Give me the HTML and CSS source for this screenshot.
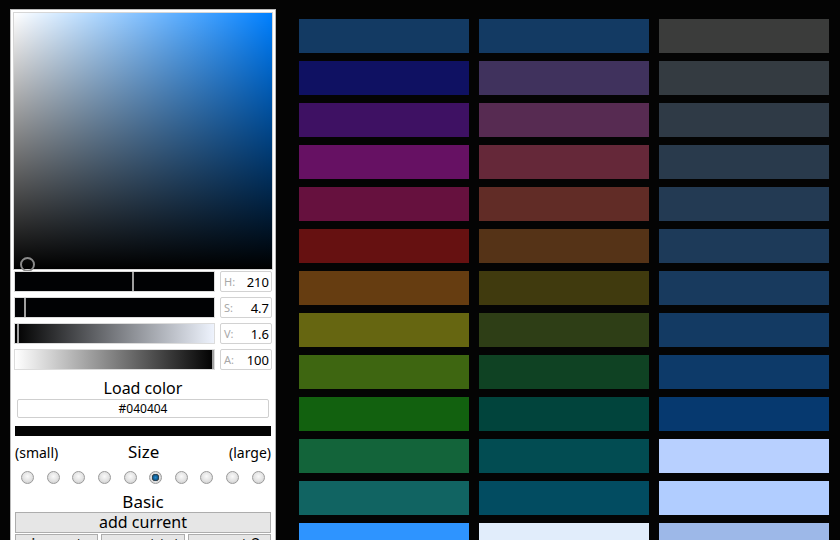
FILE: index.html
```html
<!DOCTYPE html>
<html>
<head>
<meta charset="utf-8">
<link rel="stylesheet" href="styles.css">
</head>
<body>
<div class="picker">
  <div class="sv">
    <span class="cursor"></span>
  </div>
  <div class="row">
    <div class="bar hue"><span class="mark" style="left:117px"></span></div>
    <div class="field"><span class="lbl">H:</span><span class="val">210</span></div>
  </div>
  <div class="row">
    <div class="bar sat"><span class="mark" style="left:9px"></span></div>
    <div class="field"><span class="lbl">S:</span><span class="val">4.7</span></div>
  </div>
  <div class="row">
    <div class="bar value"><span class="mark" style="left:2px"></span></div>
    <div class="field"><span class="lbl">V:</span><span class="val">1.6</span></div>
  </div>
  <div class="row">
    <div class="bar alpha"><span class="mark" style="left:197px"></span></div>
    <div class="field"><span class="lbl">A:</span><span class="val">100</span></div>
  </div>
  <div class="title">Load color</div>
  <div class="hexbox">#040404</div>
  <div class="preview"></div>
  <div class="sizerow">
    <span class="small">(small)</span>
    <span class="sizetitle">Size</span>
    <span class="small">(large)</span>
  </div>
  <div class="radios">
    <span class="cell"><span class="radio"></span></span>
    <span class="cell"><span class="radio"></span></span>
    <span class="cell"><span class="radio"></span></span>
    <span class="cell"><span class="radio"></span></span>
    <span class="cell"><span class="radio"></span></span>
    <span class="cell"><span class="radio on"></span></span>
    <span class="cell"><span class="radio"></span></span>
    <span class="cell"><span class="radio"></span></span>
    <span class="cell"><span class="radio"></span></span>
    <span class="cell"><span class="radio"></span></span>
  </div>
  <div class="title basic">Basic</div>
  <div class="btn wide">add current</div>
  <div class="btnrow">
    <div class="btn">import</div>
    <div class="btn">export txt</div>
    <div class="btn">export 2</div>
  </div>
</div>
<div class="palette">
  <div class="sw" style="background:#133a63"></div>
  <div class="sw" style="background:#133a63"></div>
  <div class="sw" style="background:#3b3c3b"></div>
  <div class="sw" style="background:#0f1162"></div>
  <div class="sw" style="background:#40325d"></div>
  <div class="sw" style="background:#343b41"></div>
  <div class="sw" style="background:#3e1163"></div>
  <div class="sw" style="background:#572b52"></div>
  <div class="sw" style="background:#2f3a46"></div>
  <div class="sw" style="background:#661163"></div>
  <div class="sw" style="background:#652839"></div>
  <div class="sw" style="background:#293a4c"></div>
  <div class="sw" style="background:#66113e"></div>
  <div class="sw" style="background:#612c26"></div>
  <div class="sw" style="background:#233a53"></div>
  <div class="sw" style="background:#661111"></div>
  <div class="sw" style="background:#553317"></div>
  <div class="sw" style="background:#1d3a59"></div>
  <div class="sw" style="background:#663d11"></div>
  <div class="sw" style="background:#403a0e"></div>
  <div class="sw" style="background:#183a5e"></div>
  <div class="sw" style="background:#666611"></div>
  <div class="sw" style="background:#2e3e16"></div>
  <div class="sw" style="background:#133a63"></div>
  <div class="sw" style="background:#3e6611"></div>
  <div class="sw" style="background:#0f4223"></div>
  <div class="sw" style="background:#0d3a69"></div>
  <div class="sw" style="background:#12610f"></div>
  <div class="sw" style="background:#01443c"></div>
  <div class="sw" style="background:#06396f"></div>
  <div class="sw" style="background:#13643a"></div>
  <div class="sw" style="background:#024c52"></div>
  <div class="sw" style="background:#b8d0ff"></div>
  <div class="sw" style="background:#116462"></div>
  <div class="sw" style="background:#024c61"></div>
  <div class="sw" style="background:#b1cdff"></div>
  <div class="sw" style="background:#2e94ff"></div>
  <div class="sw" style="background:#e1edfb"></div>
  <div class="sw" style="background:#9db8e8"></div>
</div>
</body>
</html>
```

FILE: styles.css
```css
html, body {
  margin: 0;
  padding: 0;
}
body {
  background: #040404;
  width: 840px;
  height: 540px;
  overflow: hidden;
  display: flex;
  align-items: flex-start;
  font-family: "Noto Sans", "DejaVu Sans", sans-serif;
  color: #000;
}
.picker {
  margin: 9px 0 0 10px;
  width: 258px;
  padding: 3px;
  background: #fff;
  border: 1px solid #b9b9b9;
  display: flex;
  flex-direction: column;
}
.sv {
  position: relative;
  height: 256px;
  background:
    linear-gradient(to bottom, rgba(0,0,0,0), #000),
    linear-gradient(to right, #fff, rgba(255,255,255,0)),
    #0080ff;
  box-shadow: 0 0 0 1px #d6d6d6;
}
.cursor {
  position: absolute;
  left: 6px;
  top: 244px;
  width: 11px;
  height: 11px;
  border: 2px solid #8a8a8a;
  border-radius: 50%;
}
.row {
  display: flex;
  gap: 5px;
  height: 21px;
  margin-top: 5px;
}
.row:first-of-type {
  margin-top: 2px;
}
.sv + .row {
  margin-top: 2px;
}
.bar {
  position: relative;
  width: 199px;
  height: 19px;
  border: 1px solid #dcdcdc;
  background: #010204;
}
.bar.value {
  background: linear-gradient(to right, #000, #eef3fd);
}
.bar.alpha {
  background: linear-gradient(to right, #fff, #000);
}
.mark {
  position: absolute;
  top: 0;
  bottom: 0;
  width: 2px;
  background: #a0a0a0;
}
.field {
  flex: 1;
  display: flex;
  justify-content: space-between;
  align-items: center;
  border: 1px solid #d2d2d2;
  border-radius: 2px;
  padding: 0 2px 0 3px;
  height: 19px;
}
.lbl {
  font-size: 11px;
  color: #a8a8a8;
}
.val {
  font-size: 13px;
}
.title {
  text-align: center;
  font-size: 16px;
  line-height: 20px;
  margin-top: 8px;
}
.hexbox {
  margin: 1px 3px 0 3px;
  height: 17px;
  border: 1px solid #cfcfcf;
  border-radius: 2px;
  font-size: 12px;
  line-height: 17px;
  text-align: center;
}
.preview {
  margin: 8px 1px 0 1px;
  height: 10px;
  background: #040404;
}
.sizerow {
  margin-top: 6px;
  display: flex;
  justify-content: space-between;
  align-items: baseline;
  padding: 0 1px;
}
.small {
  font-size: 14px;
  line-height: 20px;
}
.sizetitle {
  font-size: 17px;
  line-height: 20px;
}
.radios {
  display: flex;
  margin-top: 8px;
  padding: 0 1px;
}
.cell {
  flex: 1;
  display: flex;
  justify-content: center;
}
.radio {
  width: 11px;
  height: 11px;
  border: 1px solid #9a9a9a;
  border-radius: 50%;
  background: radial-gradient(circle at 50% 40%, #fafafa 0, #e4e4e4 50%, #c6c6c6 100%);
}
.radio.on {
  background: radial-gradient(circle, #2a8ad0 0, #0c5a8e 2.5px, #3a3a3a 3.5px, #e0e0e0 4px, #c8c8c8 100%);
}
.basic {
  font-size: 17px;
  margin-top: 8px;
}
.btn {
  background: #e6e6e6;
  border: 1px solid #adadad;
  font-size: 16px;
  line-height: 19px;
  text-align: center;
}
.wide {
  margin: 0 1px;
}
.btnrow {
  margin: 1px 1px 0 1px;
  display: flex;
  gap: 3px;
}
.btnrow .btn {
  flex: 1;
}
.palette {
  margin: 19px 0 0 23px;
  display: grid;
  grid-template-columns: repeat(3, 170px);
  grid-auto-rows: 34px;
  column-gap: 10px;
  row-gap: 8px;
}
```
